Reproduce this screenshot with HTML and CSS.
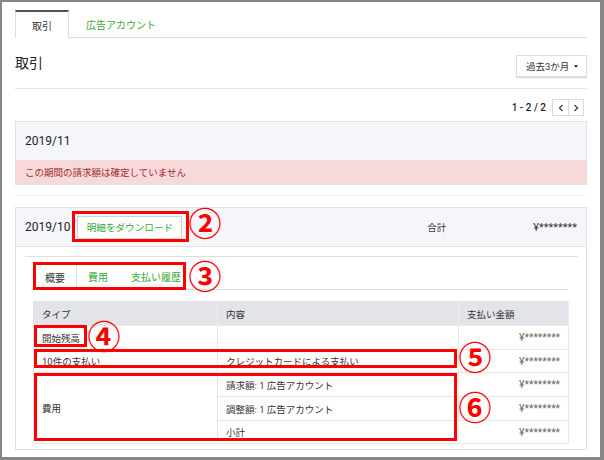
FILE: index.html
```html
<!DOCTYPE html>
<html lang="ja">
<head>
<meta charset="utf-8">
<title>取引</title>
<link rel="stylesheet" href="styles.css">
</head>
<body>
<div class="frame">
  <nav class="tabs">
    <div class="tab active">取引</div>
    <div class="tab link">広告アカウント</div>
  </nav>
  <div class="page-head">
    <h1 class="title">取引</h1>
    <div class="dropdown">過去3か月<span class="caret"></span></div>
  </div>
  <div class="pager">
    <span class="range">1 - 2 / 2</span>
    <div class="pager-btns">
      <span class="pbtn"><svg width="6" height="8" viewBox="0 0 6 8"><polyline points="4.5,1 1.5,4 4.5,7" fill="none" stroke="#444" stroke-width="1.3"/></svg></span>
      <span class="pbtn"><svg width="6" height="8" viewBox="0 0 6 8"><polyline points="1.5,1 4.5,4 1.5,7" fill="none" stroke="#444" stroke-width="1.3"/></svg></span>
    </div>
  </div>
  <section class="card">
    <div class="card-head"><span class="period">2019/11</span></div>
    <div class="alert">この期間の請求額は確定していません</div>
  </section>
  <div class="divider"></div>
  <section class="card">
    <div class="card-head bordered">
      <span class="period">2019/10</span>
      <span class="btn">明細をダウンロード</span>
      <span class="total-label">合計</span>
      <span class="total-amount">¥********</span>
    </div>
    <div class="card-body">
      <div class="inner">
        <div class="subtabs">
          <span class="subtab active">概要</span>
          <span class="subtab">費用</span>
          <span class="subtab last">支払い履歴</span>
        </div>
        <table class="grid">
          <colgroup><col class="c1"><col class="c2"><col class="c3"></colgroup>
          <thead>
            <tr class="r24"><th>タイプ</th><th>内容</th><th>支払い金額</th></tr>
          </thead>
          <tbody>
            <tr class="r24"><td>開始残高</td><td></td><td class="amt">¥********</td></tr>
            <tr class="r23"><td>10件の支払い</td><td>クレジットカードによる支払い</td><td class="amt">¥********</td></tr>
            <tr class="r24"><td rowspan="3">費用</td><td>請求額: 1 広告アカウント</td><td class="amt">¥********</td></tr>
            <tr class="r24"><td>調整額: 1 広告アカウント</td><td class="amt">¥********</td></tr>
            <tr class="r23"><td>小計</td><td class="amt">¥********</td></tr>
          </tbody>
        </table>
      </div>
    </div>
  </section>

  <div class="mark m2"></div>
  <div class="mark m3"></div>
  <div class="mark m4"></div>
  <div class="mark m5"></div>
  <div class="mark m6"></div>
  <div class="num n2">②</div>
  <div class="num n3">③</div>
  <div class="num n4">④</div>
  <div class="num n5">⑤</div>
  <div class="num n6">⑥</div>
</div>
</body>
</html>
```
FILE: styles.css
```css
* { box-sizing: border-box; }
html, body { margin: 0; padding: 0; }
body {
  background: #878787;
  font-family: Roboto, "Noto Sans CJK JP", sans-serif;
  color: #333;
  height: 460px;
  overflow: hidden;
}
.frame {
  position: relative;
  margin: 2px 4px 0 2px;
  height: 455px;
  background: #fff;
  padding: 8px 13px 0;
  overflow: hidden;
}
.tabs {
  display: flex;
  height: 28px;
  border-bottom: 1px solid #dcdcdc;
}
.tab {
  font-size: 10px;
  display: flex;
  align-items: center;
}
.tab.active {
  width: 54px;
  height: 28px;
  justify-content: center;
  background: #fff;
  border: 1px solid #dcdcdc;
  border-top: 2px solid #4b5363;
  border-bottom: none;
  margin-bottom: -1px;
  color: #333;
}
.tab.link {
  color: #36a83b;
  padding-left: 17px;
  padding-top: 2px;
}
.page-head {
  display: flex;
  justify-content: space-between;
  align-items: flex-start;
  height: 51px;
  padding-top: 17px;
  border-bottom: 1px solid #e6e6e6;
}
.title {
  margin: 0;
  font-size: 14px;
  font-weight: 400;
  line-height: 16px;
  color: #222;
}
.dropdown {
  width: 71px;
  height: 22px;
  border: 1px solid #dedede;
  box-shadow: 0 1px 1px rgba(0, 0, 0, 0.15);
  background: #fff;
  font-size: 9.5px;
  display: flex;
  align-items: center;
  padding-left: 9px;
  color: #333;
}
.caret {
  width: 0;
  height: 0;
  border-top: 3px solid #333;
  border-left: 2.5px solid transparent;
  border-right: 2.5px solid transparent;
  margin-left: 5px;
}
.pager {
  height: 32px;
  display: flex;
  justify-content: flex-end;
  align-items: flex-start;
  padding-top: 10px;
  padding-right: 3px;
}
.range {
  font-size: 10px;
  font-weight: 500;
  line-height: 17px;
  margin-right: 6px;
  color: #222;
}
.pager-btns {
  display: flex;
  height: 17px;
  border: 1px solid #dcdcdc;
}
.pbtn {
  width: 15px;
  display: flex;
  align-items: center;
  justify-content: center;
}
.pbtn + .pbtn { border-left: 1px solid #dcdcdc; }
.card {
  border: 1px solid #e1e1e1;
}
.card-head {
  height: 38px;
  background: #f5f6fa;
  display: flex;
  align-items: center;
  padding: 0 9px;
}
.card-head.bordered {
  height: 39px;
  border-bottom: 1px solid #e1e1e1;
}
.period {
  font-size: 12px;
  color: #222;
}
.alert {
  height: 24px;
  background: #f8d9da;
  color: #a02a30;
  font-size: 9.5px;
  display: flex;
  align-items: center;
  padding-left: 9px;
}
.divider {
  margin-top: 10px;
  height: 1px;
  background: #f3f3f3;
  margin-bottom: 11px;
}
.btn {
  margin-left: 7px;
  width: 105px;
  height: 23px;
  border: 1px solid #d2d2d2;
  background: #fff;
  color: #36a83b;
  font-size: 9.6px;
  display: flex;
  align-items: center;
  justify-content: center;
}
.total-label {
  margin-left: auto;
  font-size: 9.5px;
  color: #333;
}
.total-amount {
  margin-left: 87px;
  font-size: 11px;
  color: #333;
}
.card-body {
  padding: 9px 8px 5px 9px;
}
.inner {
  border-top: 1px solid #dedede;
  padding: 6px 10px 0 8px;
}
.subtabs {
  display: flex;
  height: 27px;
  border-bottom: 1px solid #dedede;
}
.subtab {
  padding: 0 11px;
  font-size: 10px;
  color: #36a83b;
  display: flex;
  align-items: center;
}
.subtab.last { padding-left: 12px; }
.subtab.active {
  color: #333;
  background: #fff;
  border: 1px solid #dedede;
  border-bottom: none;
  margin-bottom: -1px;
}
.grid {
  margin-top: 11px;
  width: 100%;
  border-collapse: collapse;
  table-layout: fixed;
  border: 1px solid #e4e4e4;
}
.c1 { width: 184px; }
.c2 { width: 241px; }
.c3 { width: 110px; }
.grid th {
  background: #e2e4e9;
  text-align: left;
  font-weight: 400;
  font-size: 9.5px;
  padding: 0 8px;
  color: #333;
  border-right: 1px solid #eceef1;
}
.grid td {
  font-size: 9.5px;
  padding: 0 8px;
  border: 1px solid #e7e7e7;
  color: #333;
}
.r24 { height: 24px; }
.r23 { height: 23px; }
.grid td.amt {
  text-align: right;
  color: #666;
  font-size: 10.3px;
}
.mark {
  position: absolute;
  border: 3px solid #ff0000;
}
.m2 { left: 70px; top: 209px; width: 117px; height: 31px; }
.m3 { left: 31px; top: 260px; width: 153px; height: 28px; }
.m4 { left: 32px; top: 323px; width: 53px; height: 22px; }
.m5 { left: 32px; top: 347px; width: 423px; height: 19px; }
.m6 { left: 32px; top: 371px; width: 423px; height: 68px; }
.num {
  position: absolute;
  width: 36px;
  height: 36px;
  display: flex;
  align-items: center;
  justify-content: center;
  font-family: "Noto Sans CJK JP", sans-serif;
  font-weight: 700;
  font-size: 33px;
  line-height: 1;
  color: #ff0000;
}
.n2 { left: 185px; top: 202px; }
.n3 { left: 185px; top: 255px; }
.n4 { left: 84px; top: 315px; }
.n5 { left: 455px; top: 336px; }
.n6 { left: 455px; top: 386px; }
```
